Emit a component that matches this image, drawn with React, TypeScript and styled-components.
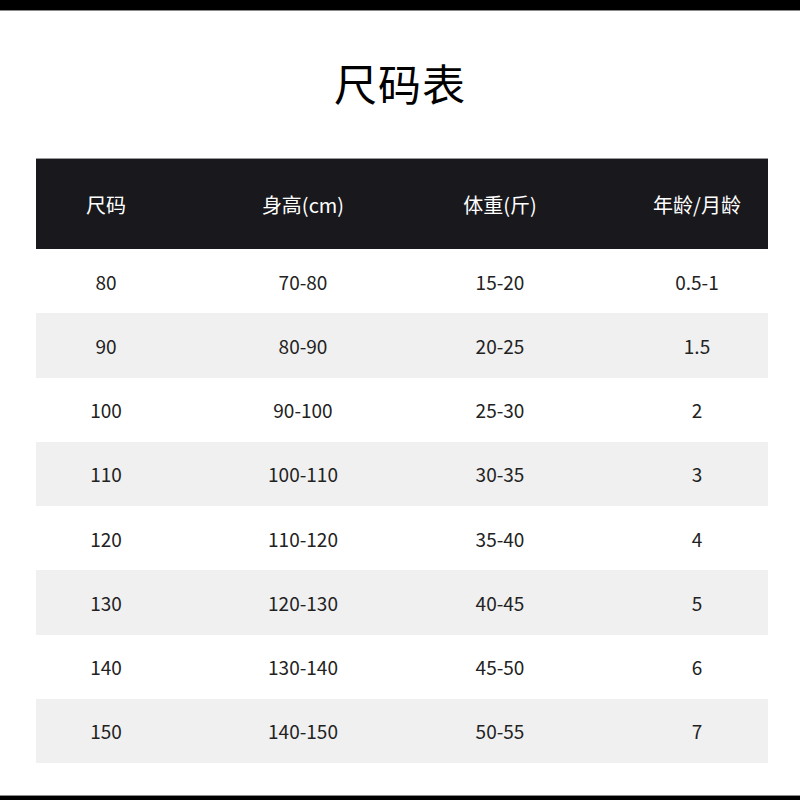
import styled, { createGlobalStyle } from 'styled-components';

const GlobalStyle = createGlobalStyle`
    html, body {
        margin: 0;
        padding: 0;
        background: #ffffff;
    }
    body {
        font-family: "Noto Sans CJK SC", "Noto Sans", sans-serif;
    }
`;

const headers = ['尺码', '身高(cm)', '体重(斤)', '年龄/月龄'];

const rows = [
    ['80', '70-80', '15-20', '0.5-1'],
    ['90', '80-90', '20-25', '1.5'],
    ['100', '90-100', '25-30', '2'],
    ['110', '100-110', '30-35', '3'],
    ['120', '110-120', '35-40', '4'],
    ['130', '120-130', '40-45', '5'],
    ['140', '130-140', '45-50', '6'],
    ['150', '140-150', '50-55', '7'],
];

const App = () => {
    return (
        <>
            <GlobalStyle />
            <PageContainer>
                <TopBar />
                <Title>尺码表</Title>
                <SizeTable>
                    <HeaderRow>
                        {headers.map((h) => (
                            <Cell key={h}>{h}</Cell>
                        ))}
                    </HeaderRow>
                    {rows.map((row, i) => (
                        <DataRow key={row[0]} $striped={i % 2 === 1}>
                            {row.map((value, j) => (
                                <Cell key={j}>{value}</Cell>
                            ))}
                        </DataRow>
                    ))}
                </SizeTable>
                <BottomBar />
            </PageContainer>
        </>
    );
};

const PageContainer = styled.div`
    width: 800px;
    height: 800px;
    background-color: #ffffff;
    display: flex;
    flex-direction: column;
    box-sizing: border-box;
    overflow: hidden;
`;

const TopBar = styled.div`
    height: 10px;
    background-color: #000000;
    border-bottom: 1px solid #8a8a8a;
    flex-shrink: 0;
`;

const Title = styled.h1`
    margin: 49px 0 54px 0;
    height: 44px;
    line-height: 44px;
    font-size: 43px;
    font-weight: 400;
    color: #000000;
    text-align: center;
    letter-spacing: 1px;
`;

const SizeTable = styled.div`
    margin: 0 32px 0 36px;
    display: flex;
    flex-direction: column;
`;

const RowBase = styled.div`
    display: grid;
    grid-template-columns: repeat(4, 120px);
    column-gap: 77px;
    padding-left: 10px;
    align-items: center;
`;

const HeaderRow = styled(RowBase)`
    height: 91px;
    background-color: #18181d;
    border-top: 1px solid #9a9a9a;
    box-sizing: border-box;
    color: #ffffff;
    font-size: 20px;
`;

const DataRow = styled(RowBase)<{ $striped: boolean }>`
    height: 64.25px;
    background-color: ${({ $striped }) => ($striped ? '#f0f0f0' : '#ffffff')};
    color: #222222;
    font-size: 19px;
`;

const Cell = styled.div`
    text-align: center;
    white-space: nowrap;
`;

const BottomBar = styled.div`
    margin-top: auto;
    height: 4px;
    background-color: #000000;
    border-top: 1px solid #8a8a8a;
    flex-shrink: 0;
`;

export default App;
